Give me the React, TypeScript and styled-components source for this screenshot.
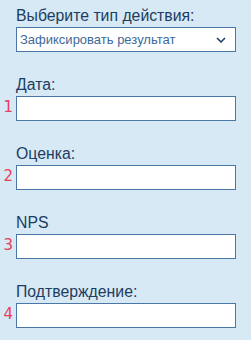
import React from "react";
import styled, {createGlobalStyle} from "styled-components";

const GlobalStyle = createGlobalStyle`
  html, body {
    margin: 0;
    padding: 0;
    background: #d6e9f5;
  }
  body {
    font-family: "Liberation Sans", Arial, sans-serif;
  }
`

const fields = ["Дата:", "Оценка:", "NPS", "Подтверждение:"];

export default function App() {
    return (
        <>
            <GlobalStyle/>
            <Form>
                <Block>
                    <Spacer/>
                    <Label>Выберите тип действия:</Label>
                    <Spacer/>
                    <Select>
                        <SelectText>Зафиксировать результат</SelectText>
                        <svg width="10" height="6" viewBox="0 0 10 6">
                            <path d="M1 1 L5 5 L9 1" fill="none" stroke="#1c3a5e" strokeWidth="1.5"/>
                        </svg>
                    </Select>
                </Block>
                {fields.map((label, i) => (
                    <Block key={label}>
                        <Spacer/>
                        <Label>{label}</Label>
                        <Num>{i + 1}</Num>
                        <Input/>
                    </Block>
                ))}
            </Form>
        </>
    );
}

const Form = styled.div`
  display: flex;
  flex-direction: column;
  gap: 24px;
  padding-top: 7px;
  height: 340px;
  box-sizing: border-box;
`
const Block = styled.div`
  display: grid;
  grid-template-columns: 16px 220px;
  row-gap: 3px;
`
const Spacer = styled.span``
const Label = styled.div`
  font-size: 15.8px;
  line-height: 17px;
  color: #1d3c62;
`
const Num = styled.span`
  font-family: "DejaVu Sans", Verdana, sans-serif;
  font-size: 15px;
  color: #e8405a;
  display: flex;
  align-items: center;
  justify-content: flex-end;
  padding-right: 3px;
  margin-top: -3px;
`
const Select = styled.div`
  height: 25px;
  box-sizing: border-box;
  border: 1px solid #4a77a6;
  background: #fff;
  display: flex;
  align-items: center;
  justify-content: space-between;
  padding: 0 9px 0 3px;
`
const SelectText = styled.span`
  font-size: 13px;
  color: #3d6a99;
`
const Input = styled.input`
  height: 25px;
  box-sizing: border-box;
  border: 1px solid #4a77a6;
  background: #fff;
  margin: 0;
  padding: 0 4px;
  outline: none;
`
